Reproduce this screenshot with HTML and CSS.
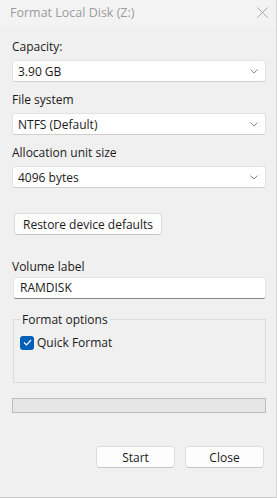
FILE: index.html
```html
<!DOCTYPE html>
<html lang="en">
<head>
    <meta charset="UTF-8">
    <meta name="viewport" content="width=device-width, initial-scale=1.0">
    <title>Format Local Disk (Z:)</title>
    <link rel="stylesheet" href="styles.css">
</head>
<body>
    <div class="window">
        <div class="titlebar">
            <span class="title">Format Local Disk (Z:)</span>
            <svg class="close-icon" width="11" height="11" viewBox="0 0 11 11">
                <path d="M0.5 0.5 L10.5 10.5 M10.5 0.5 L0.5 10.5" stroke="#a6a6a6" stroke-width="1" fill="none"/>
            </svg>
        </div>

        <div class="content">
            <div class="field">
                <label class="field-label">Capacity:</label>
                <div class="combo">
                    <span>3.90 GB</span>
                    <svg class="chevron" width="8" height="5" viewBox="0 0 8 5"><path d="M0.5 0.5 L4 4 L7.5 0.5" stroke="#8a8a8a" stroke-width="1" fill="none"/></svg>
                </div>
            </div>

            <div class="field">
                <label class="field-label">File system</label>
                <div class="combo">
                    <span>NTFS (Default)</span>
                    <svg class="chevron" width="8" height="5" viewBox="0 0 8 5"><path d="M0.5 0.5 L4 4 L7.5 0.5" stroke="#8a8a8a" stroke-width="1" fill="none"/></svg>
                </div>
            </div>

            <div class="field">
                <label class="field-label">Allocation unit size</label>
                <div class="combo">
                    <span>4096 bytes</span>
                    <svg class="chevron" width="8" height="5" viewBox="0 0 8 5"><path d="M0.5 0.5 L4 4 L7.5 0.5" stroke="#8a8a8a" stroke-width="1" fill="none"/></svg>
                </div>
            </div>

            <button class="btn restore-btn">Restore device defaults</button>

            <div class="field volume">
                <label class="field-label">Volume label</label>
                <div class="textbox">RAMDISK</div>
            </div>

            <fieldset class="options">
                <legend>Format options</legend>
                <label class="check-row">
                    <span class="checkbox">
                        <svg width="9" height="7" viewBox="0 0 9 7"><path d="M1 3.5 L3.5 6 L8 1" stroke="#fff" stroke-width="1.2" fill="none"/></svg>
                    </span>
                    Quick Format
                </label>
            </fieldset>

            <div class="progress"></div>

            <div class="actions">
                <button class="btn action-btn">Start</button>
                <button class="btn action-btn">Close</button>
            </div>
        </div>
    </div>
</body>
</html>
```

FILE: styles.css
```css
* {
    box-sizing: border-box;
}

body {
    margin: 0;
    font-family: 'Open Sans', 'Noto Sans', sans-serif;
    font-size: 12px;
    color: #1b1b1b;
    background: #f0f0f0;
}

.window {
    width: 277px;
    height: 498px;
    background: #f0f0f0;
    border-right: 1px solid #d4d4d4;
    border-bottom: 1px solid #c8c8c8;
}

.titlebar {
    height: 26px;
    display: flex;
    align-items: center;
    justify-content: space-between;
    padding: 0 8px 1px 10px;
    background: #f3f3f3;
}

.title {
    color: #9c9c9c;
    font-size: 12.5px;
}

.close-icon {
    display: block;
}

.content {
    padding: 13px 10px 0 12px;
}

.field {
    margin-bottom: 10px;
}

.field-label {
    display: block;
    height: 16px;
    line-height: 16px;
}

.combo {
    margin-top: 5px;
    height: 22px;
    display: flex;
    align-items: center;
    justify-content: space-between;
    padding: 0 7px 0 5px;
    background: #fff;
    border: 1px solid #e3e3e3;
    border-bottom-color: #cfcfcf;
    border-radius: 3px;
}

.chevron {
    display: block;
}

.btn {
    height: 22px;
    font-family: inherit;
    font-size: 12px;
    color: #1b1b1b;
    background: #fdfdfd;
    border: 1px solid #dcdcdc;
    border-bottom-color: #c4c4c4;
    border-radius: 4px;
}

.restore-btn {
    margin: 15px 0 0 2px;
    padding: 0 8px;
}

.volume {
    margin-top: 24px;
}

.volume .field-label {
    margin-bottom: 2px;
}

.textbox {
    height: 22px;
    line-height: 20px;
    padding: 0 6px;
    margin-left: 1px;
    background: #fff;
    border: 1px solid #e6e6e6;
    border-bottom: 1px solid #868686;
    border-radius: 3px;
}

.options {
    margin: 12px 0 0 1px;
    padding: 6px 6px 0 6px;
    height: 72px;
    border: 1px solid #dcdcdc;
    border-radius: 0;
}

.options legend {
    padding: 0 2px;
}

.check-row {
    display: flex;
    align-items: center;
    gap: 3px;
}

.checkbox {
    width: 14px;
    height: 14px;
    display: flex;
    align-items: center;
    justify-content: center;
    background: #005fb8;
    border-radius: 3px;
}

.progress {
    margin-top: 15px;
    height: 15px;
    background: #e6e6e6;
    border: 1px solid #bcbcbc;
}

.actions {
    display: flex;
    justify-content: flex-end;
    gap: 10px;
    margin-top: 33px;
    padding-right: 2px;
}

.action-btn {
    width: 79px;
}
```
